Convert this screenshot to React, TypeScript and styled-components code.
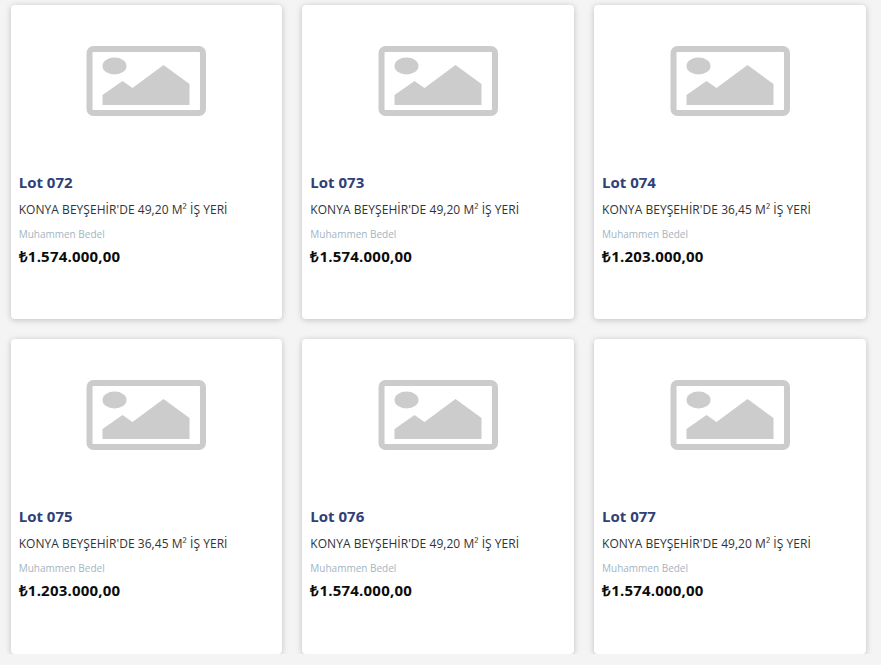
import React from "react";
import styled, { createGlobalStyle } from "styled-components";

const Global = createGlobalStyle`
  html, body { margin: 0; padding: 0; background: #f4f4f4; }
  body { font-family: "Open Sans", "Liberation Sans", sans-serif; overflow: hidden; }
`;

const Grid = styled.div`
  display: grid;
  grid-template-columns: repeat(3, 1fr);
  grid-auto-rows: 314.49px;
  gap: 19.8px 20px;
  padding: 5px 15.33px 0 10.67px;
`;

const Card = styled.article`
  background: #fff;
  border-radius: 4px;
  box-shadow: 0 1px 6px rgba(0, 0, 0, 0.22);
  padding: 0 8px;
  display: flex;
  flex-direction: column;
  min-width: 0;
`;

const Media = styled.div`
  height: 152px;
  margin: 0 -8px;
  display: flex;
  align-items: center;
  justify-content: center;
  flex: none;
`;

const Icon = styled.svg`
  display: block;
  filter: blur(0.35px);
`;

const Lot = styled.h3`
  margin: 15px 0 0;
  font-size: 15px;
  line-height: 20px;
  font-weight: 700;
  color: #2f4077;
`;

const Title = styled.p`
  margin: 9px 0 0;
  font-size: 12px;
  line-height: 18px;
  font-weight: 400;
  letter-spacing: 0.05px;
  color: #333;
  white-space: nowrap;
`;

const Label = styled.span`
  margin-top: 8px;
  font-size: 10px;
  line-height: 14px;
  color: #a3b5c1;
`;

const Price = styled.strong`
  margin-top: 5px;
  font-size: 15px;
  line-height: 21px;
  font-weight: 700;
  letter-spacing: 0.2px;
  color: #0c0c0c;
`;

const Placeholder = () => (
  <Icon width="120" height="70" viewBox="-0.5 0 120 70" aria-hidden="true">
    <rect x="3" y="3" width="113.5" height="64" rx="4" fill="none" stroke="#cccccc" strokeWidth="6" />
    <ellipse cx="28" cy="20" rx="12" ry="8.5" fill="#cccccc" />
    <path d="M16 59V49L36 35L46 42L77 19L103 38V59Z" fill="#cccccc" />
  </Icon>
);

const lots = [
  { lot: "072", title: "KONYA BEYŞEHİR'DE 49,20 M² İŞ YERİ", price: "₺1.574.000,00" },
  { lot: "073", title: "KONYA BEYŞEHİR'DE 49,20 M² İŞ YERİ", price: "₺1.574.000,00" },
  { lot: "074", title: "KONYA BEYŞEHİR'DE 36,45 M² İŞ YERİ", price: "₺1.203.000,00" },
  { lot: "075", title: "KONYA BEYŞEHİR'DE 36,45 M² İŞ YERİ", price: "₺1.203.000,00" },
  { lot: "076", title: "KONYA BEYŞEHİR'DE 49,20 M² İŞ YERİ", price: "₺1.574.000,00" },
  { lot: "077", title: "KONYA BEYŞEHİR'DE 49,20 M² İŞ YERİ", price: "₺1.574.000,00" },
];

export default function App() {
  return (
    <>
      <Global />
      <Grid>
        {lots.map((l) => (
          <Card key={l.lot}>
            <Media>
              <Placeholder />
            </Media>
            <Lot>Lot {l.lot}</Lot>
            <Title>{l.title}</Title>
            <Label>Muhammen Bedel</Label>
            <Price>{l.price}</Price>
          </Card>
        ))}
      </Grid>
    </>
  );
}
